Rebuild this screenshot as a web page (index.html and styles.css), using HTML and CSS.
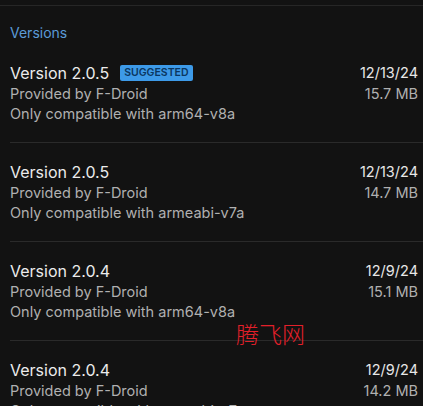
FILE: index.html
```html
<!DOCTYPE html>
<html>
<head>
  <meta charset="utf-8">
  <link rel="stylesheet" href="styles.css">
  <title>Versions</title>
</head>
<body>
  <div class="topbar"></div>

  <h2 class="section-title">Versions</h2>

  <ul class="versions">
    <li class="version">
      <div class="info">
        <div class="name">Version 2.0.5 <span class="badge">SUGGESTED</span></div>
        <div class="sub">Provided by F-Droid</div>
        <div class="sub">Only compatible with arm64-v8a</div>
      </div>
      <div class="meta">
        <div class="date">12/13/24</div>
        <div class="sub">15.7 MB</div>
      </div>
    </li>
    <li class="version">
      <div class="info">
        <div class="name">Version 2.0.5</div>
        <div class="sub">Provided by F-Droid</div>
        <div class="sub">Only compatible with armeabi-v7a</div>
      </div>
      <div class="meta">
        <div class="date">12/13/24</div>
        <div class="sub">14.7 MB</div>
      </div>
    </li>
    <li class="version">
      <div class="info">
        <div class="name">Version 2.0.4</div>
        <div class="sub">Provided by F-Droid</div>
        <div class="sub">Only compatible with arm64-v8a</div>
      </div>
      <div class="meta">
        <div class="date">12/9/24</div>
        <div class="sub">15.1 MB</div>
      </div>
      <span class="watermark">腾飞网</span>
    </li>
    <li class="version">
      <div class="info">
        <div class="name">Version 2.0.4</div>
        <div class="sub">Provided by F-Droid</div>
        <div class="sub">Only compatible with armeabi-v7a</div>
      </div>
      <div class="meta">
        <div class="date">12/9/24</div>
        <div class="sub">14.2 MB</div>
      </div>
    </li>
  </ul>
</body>
</html>
```

FILE: styles.css
```css
body {
  margin: 0;
  background-color: #121212;
  color: #e6e6e6;
  font-family: Inter, "Noto Sans", sans-serif;
  height: 406px;
  overflow: hidden;
}

.topbar {
  height: 5px;
  border-bottom: 1px solid #262626;
}

.section-title {
  margin: 0;
  padding: 17px 10px 0 10px;
  height: 21px;
  font-size: 14px;
  font-weight: normal;
  line-height: 20px;
  color: #5b9ad6;
}

.versions {
  list-style: none;
  margin: 0;
  padding: 0;
}

.version {
  position: relative;
  display: flex;
  justify-content: space-between;
  align-items: flex-start;
  margin-left: 10px;
  padding: 18px 5px 18px 0;
  border-bottom: 1px solid #2a2a2a;
}

.name {
  display: flex;
  align-items: center;
  gap: 11px;
  font-size: 16px;
  line-height: 22px;
  color: #ececec;
}

.badge {
  background-color: #3d9ae8;
  color: #0b3660;
  font-size: 10.5px;
  font-weight: 600;
  line-height: 16px;
  padding: 0 4px;
  border-radius: 2px;
}

.sub {
  font-size: 14.5px;
  line-height: 20px;
  color: #b0b0b0;
}

.meta {
  text-align: right;
}

.date {
  font-size: 14.5px;
  line-height: 22px;
  color: #e8e8e8;
}

.watermark {
  position: absolute;
  left: 226px;
  top: 80px;
  font-family: "Noto Sans CJK SC", sans-serif;
  font-size: 23px;
  line-height: 23px;
  font-weight: 300;
  color: #e3202a;
}
```
